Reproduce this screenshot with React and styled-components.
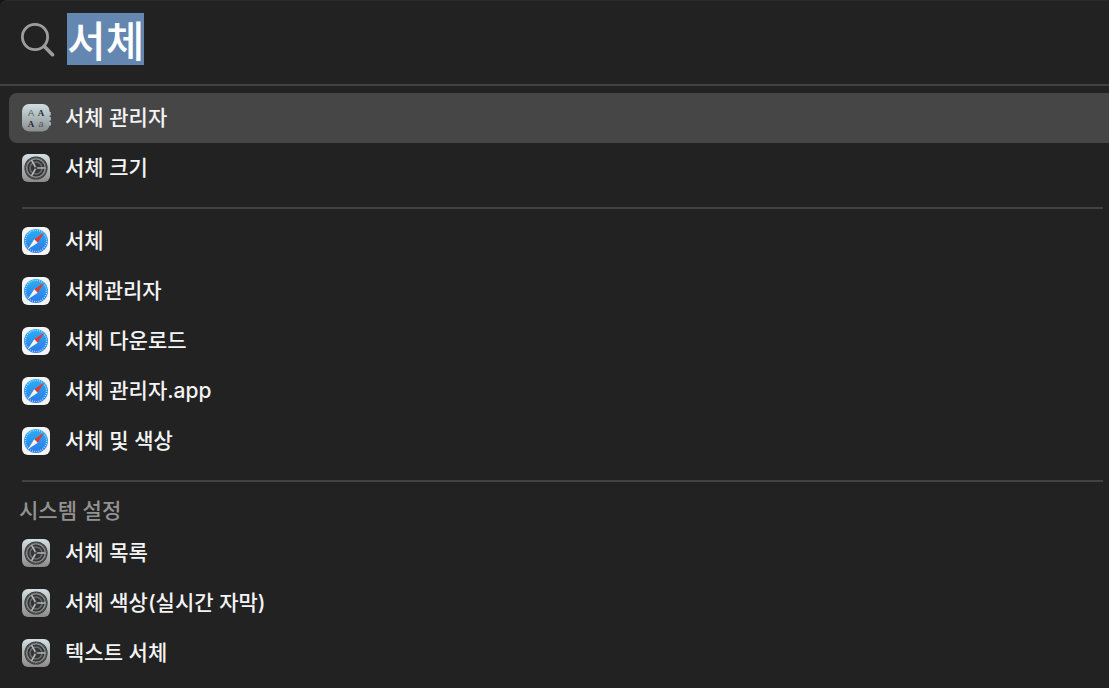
import React, { useEffect, useRef } from 'react';
import styled, { createGlobalStyle } from 'styled-components';

const GlobalStyle = createGlobalStyle`
	* {
		box-sizing: border-box;
	}
	body {
		margin: 0;
		background: #161616;
		color: #f4f4f4;
		font-family: 'Inter', 'Noto Sans CJK KR', sans-serif;
		font-size: 21px;
		font-weight: 500;
	}
`;

const Panel = styled.main`
	min-height: 100vh;
	overflow: hidden;
	background: #222222;
	border-top-left-radius: 8px;
	box-shadow: inset 0 1px 0 #2c2c2c;
`;

const SearchBar = styled.label`
	display: flex;
	align-items: center;
	gap: 12px;
	padding: 13px 20px 19px;
	border-bottom: 2px solid #424242;
`;

const SearchInput = styled.input`
	flex: 1;
	min-width: 0;
	height: 52px;
	padding: 0;
	border: 0;
	outline: 0;
	background: transparent;
	color: #ffffff;
	caret-color: transparent;
	font-family: 'Noto Sans CJK KR', sans-serif;
	font-size: 42px;
	font-weight: 500;
	line-height: 52px;

	&::selection {
		background: #6387b0;
		color: #ffffff;
	}
`;

const Results = styled.div`
	padding: 7px 0 7px 9px;
`;

const Group = styled.section`
	& + & {
		margin-top: 14px;
	}
`;

const Divider = styled.hr`
	height: 2px;
	margin: 0 6px 7px 13px;
	border: 0;
	background: #424242;
`;

const GroupTitle = styled.h2`
	margin: 0;
	padding: 10px 10px 5px;
	color: #929292;
	font-size: 21px;
	font-weight: 500;
	line-height: 24px;
`;

const List = styled.ul`
	margin: 0;
	padding: 0;
	list-style: none;
`;

const Row = styled.button`
	display: flex;
	align-items: center;
	gap: 14px;
	width: 100%;
	height: 50px;
	padding: 0 12px;
	border: 0;
	border-radius: 8px 0 0 8px;
	background: ${({ $active }) => ($active ? '#464646' : 'transparent')};
	color: inherit;
	font: inherit;
	line-height: 28px;
	text-align: left;
`;

const Icon = styled.svg`
	flex: none;
	width: ${({ $size }) => $size}px;
	height: ${({ $size }) => $size}px;
`;

function SearchIcon() {
	return (
		<Icon $size={35} viewBox="0 0 35 35" fill="none" stroke="#9d9d9d" aria-hidden="true">
			<circle cx="15" cy="15" r="12.6" strokeWidth="2.8" />
			<path d="M24.4 24.6L32.5 32.7" strokeWidth="3.6" strokeLinecap="round" />
		</Icon>
	);
}

function FontBookIcon() {
	return (
		<Icon $size={30} viewBox="0 0 30 30" aria-hidden="true">
			<defs>
				<linearGradient id="book" x1="0" y1="0" x2="0" y2="1">
					<stop offset="0" stopColor="#cfdfe3" />
					<stop offset="1" stopColor="#8a8f90" />
				</linearGradient>
			</defs>
			<path d="M28 9h1.8v3.4H28zM28 14h1.8v3.4H28zM28 19h1.8v3.4H28z" fill="#b8c0c2" />
			<rect x="1" y="1" width="27.6" height="27.4" rx="7" fill="url(#book)" />
			<g fill="#262e30" fontSize="9" textAnchor="middle">
				<text x="10" y="13" fontFamily="Liberation Sans" fill="#4a5356">A</text>
				<text x="20" y="13" fontFamily="Liberation Serif" fontWeight="700">A</text>
				<text x="10" y="24" fontFamily="Liberation Serif" fontWeight="700">A</text>
				<text x="20" y="24" fontFamily="Liberation Sans" fontStyle="italic" fill="#4a5356">a</text>
			</g>
		</Icon>
	);
}

function SettingsIcon() {
	return (
		<Icon $size={30} viewBox="0 0 30 30" aria-hidden="true">
			<defs>
				<linearGradient id="plate" x1="0" y1="0" x2="0" y2="1">
					<stop offset="0" stopColor="#d3e0e4" />
					<stop offset="1" stopColor="#8c8a88" />
				</linearGradient>
			</defs>
			<rect x="1" y="1" width="28" height="28" rx="6" fill="url(#plate)" />
			<circle cx="15" cy="15" r="11.6" fill="#333535" />
			<circle cx="15" cy="15" r="9.3" fill="none" stroke="#8a8c8c" strokeWidth="1.5" />
			<circle cx="15" cy="15" r="10.4" fill="none" stroke="#717474" strokeWidth=".9" strokeDasharray="1 .8" />
			<circle cx="15" cy="15" r="6" fill="none" stroke="#6a6d6d" strokeWidth="1.6" />
			<path d="M15 15h9M15 15L10.5 7.2M15 15L10.5 22.8" stroke="#b4b7b7" strokeWidth="1.7" />
			<circle cx="15" cy="15" r="1.4" fill="#4c4f4f" />
		</Icon>
	);
}

function SafariIcon() {
	return (
		<Icon $size={30} viewBox="0 0 30 30" aria-hidden="true">
			<defs>
				<linearGradient id="compass" x1="0" y1="0" x2="0" y2="1">
					<stop offset="0" stopColor="#2cb0f5" />
					<stop offset="1" stopColor="#2a78e6" />
				</linearGradient>
			</defs>
			<rect x="1" y="1" width="28" height="28" rx="6" fill="#f5f5f5" />
			<circle cx="15" cy="15" r="12" fill="url(#compass)" />
			<circle cx="15" cy="15" r="10.6" fill="none" stroke="#c9e6fb" strokeWidth="1.4" strokeDasharray=".8 1.4" />
			<path d="M23.4 6.6L13.3 13.3L16.7 16.7Z" fill="#e5392f" />
			<path d="M6.6 23.4L13.3 13.3L16.7 16.7Z" fill="#f4f4f4" />
		</Icon>
	);
}

const groups = [
	{
		id: 'top',
		items: [
			{ name: '서체 관리자', icon: FontBookIcon, active: true },
			{ name: '서체 크기', icon: SettingsIcon },
		],
	},
	{
		id: 'suggestions',
		items: [
			{ name: '서체', icon: SafariIcon },
			{ name: '서체관리자', icon: SafariIcon },
			{ name: '서체 다운로드', icon: SafariIcon },
			{ name: '서체 관리자.app', icon: SafariIcon },
			{ name: '서체 및 색상', icon: SafariIcon },
		],
	},
	{
		id: 'settings',
		title: '시스템 설정',
		items: [
			{ name: '서체 목록', icon: SettingsIcon },
			{ name: '서체 색상(실시간 자막)', icon: SettingsIcon },
			{ name: '텍스트 서체', icon: SettingsIcon },
		],
	},
];

export default function App() {
	const input = useRef(null);

	useEffect(() => {
		input.current.focus();
		input.current.select();
	}, []);

	return (
		<>
			<GlobalStyle />
			<Panel>
				<SearchBar htmlFor="search">
					<SearchIcon />
					<SearchInput id="search" ref={input} type="text" aria-label="검색" defaultValue="서체" autoComplete="off" spellCheck={false} />
				</SearchBar>
				<Results>
					{groups.map((group, index) => (
						<Group key={group.id}>
							{index > 0 && <Divider />}
							{group.title && <GroupTitle>{group.title}</GroupTitle>}
							<List>
								{group.items.map(({ name, icon: ItemIcon, active }) => (
									<li key={name}>
										<Row type="button" $active={active}>
											<ItemIcon />
											{name}
										</Row>
									</li>
								))}
							</List>
						</Group>
					))}
				</Results>
			</Panel>
		</>
	);
}
